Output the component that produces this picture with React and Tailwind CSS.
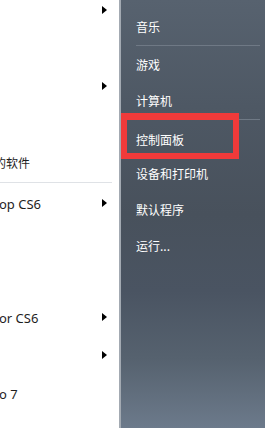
import React from "react";

const Arrow = () => (
  <svg width="5" height="8" viewBox="0 0 5 8" className="absolute left-[102px] top-1/2 -translate-y-1/2">
    <path d="M0 0 L5 4 L0 8 Z" fill="#000" />
  </svg>
);

function LeftRow({ text, arrow, cjk, offset = 0 }) {
  return (
    <div className="relative h-[38px] flex items-center">
      {text && (
        <span
          className={
            "whitespace-nowrap text-[#1e1e1e] translate-y-[2px] " + (cjk ? "text-[12px]" : "text-[13px]")
          }
          style={{ marginLeft: offset }}
        >
          {text}
        </span>
      )}
      {arrow && <Arrow />}
    </div>
  );
}

function RightRow({ text, h }) {
  return (
    <div className={"flex items-center pl-[15px] text-white text-[12px] " + h}>{text}</div>
  );
}

const Sep = () => <div className="h-px ml-[15px] mr-[5px] bg-[#6f7985]" />;

export default function App() {
  return (
    <div
      className="w-[265px] h-[428px] flex overflow-hidden"
      style={{ fontFamily: '"Noto Sans", "Noto Sans CJK SC", sans-serif' }}
    >
      <div className="w-[119px] shrink-0 bg-white flex flex-col overflow-hidden">
        <div className="-mt-[9px]">
          <LeftRow arrow />
          <LeftRow />
          <LeftRow arrow />
          <LeftRow />
          <LeftRow text="的软件" cjk offset={-6} />
        </div>
        <div className="h-px w-[112px] bg-[#dfe2e6] mt-[1px] mb-[1px]" />
        <div>
          <LeftRow text="op CS6" arrow offset={-1} />
          <LeftRow />
          <LeftRow />
          <LeftRow text="or CS6" arrow offset={-1} />
          <LeftRow arrow />
          <LeftRow text="o 7" offset={-1} />
        </div>
      </div>
      <div className="w-[2px] shrink-0 bg-[#a3aab2]" />
      <div
        className="relative flex-1 flex flex-col pt-[8px] bg-[linear-gradient(180deg,#57626f_0%,#4e5864_25%,#48515c_50%,#4a5462_68%,#56626f_84%,#6c7a8b_100%)]"
        style={{ fontFamily: '"Noto Sans CJK SC", sans-serif' }}
      >
        <RightRow text="音乐" h="h-[37px]" />
        <Sep />
        <RightRow text="游戏" h="h-[37px]" />
        <RightRow text="计算机" h="h-[36px]" />
        <Sep />
        <RightRow text="控制面板" h="h-[35px] pt-[4px]" />
        <RightRow text="设备和打印机" h="h-[36px] pt-[1px]" />
        <RightRow text="默认程序" h="h-[37px]" />
        <RightRow text="运行..." h="h-[35px]" />
        <div className="absolute left-0 top-[113px] w-[118px] h-[46px] border-[6px] border-t-[7px] border-[#f03a3a]" />
      </div>
    </div>
  );
}
